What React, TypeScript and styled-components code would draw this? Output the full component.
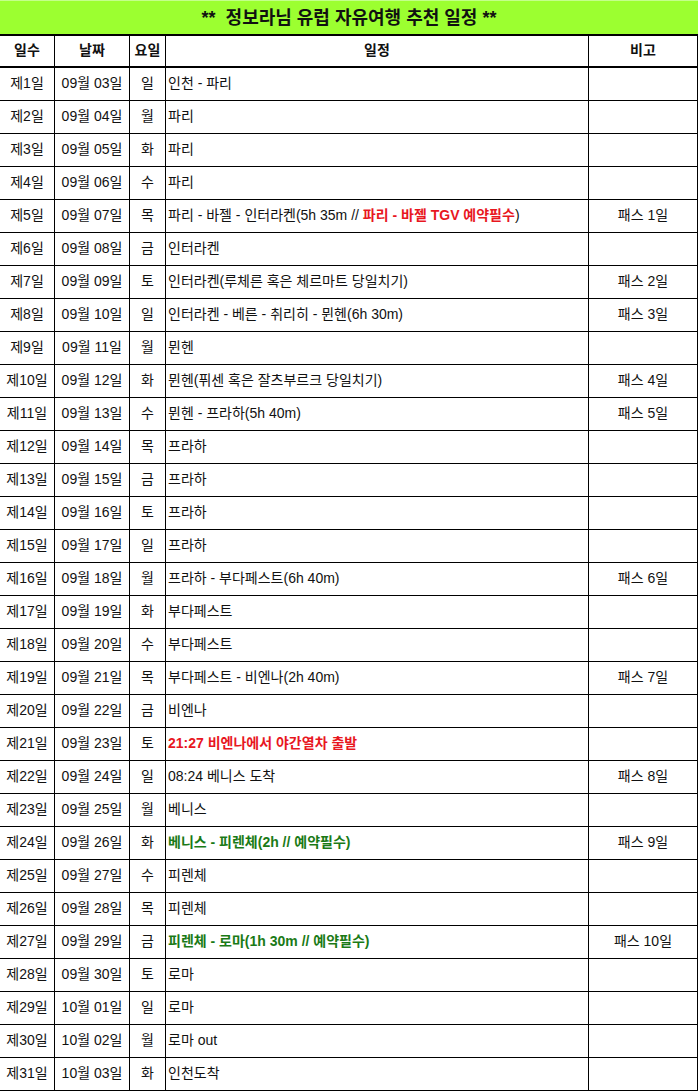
import React from "react";
import styled, { createGlobalStyle } from "styled-components";

const GlobalStyle = createGlobalStyle`
  html, body { margin: 0; padding: 0; background: #ffffff; }
  body { font-family: "Liberation Sans", "Noto Sans CJK KR", sans-serif; color: #111; }
`;

const COLS = "55px 75px 36px 423px 109px";

const Sheet = styled.div`
  width: 698px;
  display: flex;
  flex-direction: column;
`;

const Title = styled.div`
  height: 33px;
  background: #9cff30;
  border-top: 1px solid #c4ff8a;
  border-bottom: 2px solid #000;
  display: flex;
  align-items: center;
  justify-content: center;
  font-size: 18px;
  font-weight: bold;
  white-space: pre;
  color: #111;
  line-height: 1;
`;

const Row = styled.div<{ $header?: boolean }>`
  display: grid;
  grid-template-columns: ${COLS};
  height: ${(p) => (p.$header ? "30px" : "32px")};
  border-bottom: ${(p) => (p.$header ? "2px" : "1px")} solid #000;
  font-size: 14px;
  line-height: 1;
  font-weight: ${(p) => (p.$header ? "bold" : "normal")};
`;

const Cell = styled.div<{ $align?: "left" | "center" }>`
  border-right: 1px solid #000;
  display: flex;
  align-items: center;
  justify-content: ${(p) => (p.$align === "left" ? "flex-start" : "center")};
  padding-left: ${(p) => (p.$align === "left" ? "2px" : "0")};
  padding-bottom: 2px;
  white-space: pre;
  overflow: hidden;
`;

const Red = styled.span`
  color: #e8171f;
  font-weight: bold;
`;

const Green = styled.span`
  color: #1a7a16;
  font-weight: bold;
`;

type Day = { d: string; w: string; plan: React.ReactNode; note?: string };

const days: Day[] = [
  { d: "09월 03일", w: "일", plan: "인천 - 파리" },
  { d: "09월 04일", w: "월", plan: "파리" },
  { d: "09월 05일", w: "화", plan: "파리" },
  { d: "09월 06일", w: "수", plan: "파리" },
  {
    d: "09월 07일",
    w: "목",
    plan: (
      <>
        {"파리 - 바젤 - 인터라켄(5h 35m // "}
        <Red>파리 - 바젤 TGV 예약필수</Red>
        {")"}
      </>
    ),
    note: "패스 1일",
  },
  { d: "09월 08일", w: "금", plan: "인터라켄" },
  { d: "09월 09일", w: "토", plan: "인터라켄(루체른 혹은 체르마트 당일치기)", note: "패스 2일" },
  { d: "09월 10일", w: "일", plan: "인터라켄 - 베른 - 취리히 - 뮌헨(6h 30m)", note: "패스 3일" },
  { d: "09월 11일", w: "월", plan: "뮌헨" },
  { d: "09월 12일", w: "화", plan: "뮌헨(퓌센 혹은 잘츠부르크 당일치기)", note: "패스 4일" },
  { d: "09월 13일", w: "수", plan: "뮌헨 - 프라하(5h 40m)", note: "패스 5일" },
  { d: "09월 14일", w: "목", plan: "프라하" },
  { d: "09월 15일", w: "금", plan: "프라하" },
  { d: "09월 16일", w: "토", plan: "프라하" },
  { d: "09월 17일", w: "일", plan: "프라하" },
  { d: "09월 18일", w: "월", plan: "프라하 - 부다페스트(6h 40m)", note: "패스 6일" },
  { d: "09월 19일", w: "화", plan: "부다페스트" },
  { d: "09월 20일", w: "수", plan: "부다페스트" },
  { d: "09월 21일", w: "목", plan: "부다페스트 - 비엔나(2h 40m)", note: "패스 7일" },
  { d: "09월 22일", w: "금", plan: "비엔나" },
  { d: "09월 23일", w: "토", plan: <Red>21:27 비엔나에서 야간열차 출발</Red> },
  { d: "09월 24일", w: "일", plan: "08:24 베니스 도착", note: "패스 8일" },
  { d: "09월 25일", w: "월", plan: "베니스" },
  { d: "09월 26일", w: "화", plan: <Green>베니스 - 피렌체(2h // 예약필수)</Green>, note: "패스 9일" },
  { d: "09월 27일", w: "수", plan: "피렌체" },
  { d: "09월 28일", w: "목", plan: "피렌체" },
  { d: "09월 29일", w: "금", plan: <Green>피렌체 - 로마(1h 30m // 예약필수)</Green>, note: "패스 10일" },
  { d: "09월 30일", w: "토", plan: "로마" },
  { d: "10월 01일", w: "일", plan: "로마" },
  { d: "10월 02일", w: "월", plan: "로마 out" },
  { d: "10월 03일", w: "화", plan: "인천도착" },
];

export default function App() {
  return (
    <>
      <GlobalStyle />
      <Sheet>
        <Title>{"**  정보라님 유럽 자유여행 추천 일정 **"}</Title>
        <Row $header>
          <Cell>일수</Cell>
          <Cell>날짜</Cell>
          <Cell>요일</Cell>
          <Cell>일정</Cell>
          <Cell>비고</Cell>
        </Row>
        {days.map((day, i) => (
          <Row key={i}>
            <Cell>제{i + 1}일</Cell>
            <Cell>{day.d}</Cell>
            <Cell>{day.w}</Cell>
            <Cell $align="left">{day.plan}</Cell>
            <Cell>{day.note ?? ""}</Cell>
          </Row>
        ))}
      </Sheet>
    </>
  );
}
